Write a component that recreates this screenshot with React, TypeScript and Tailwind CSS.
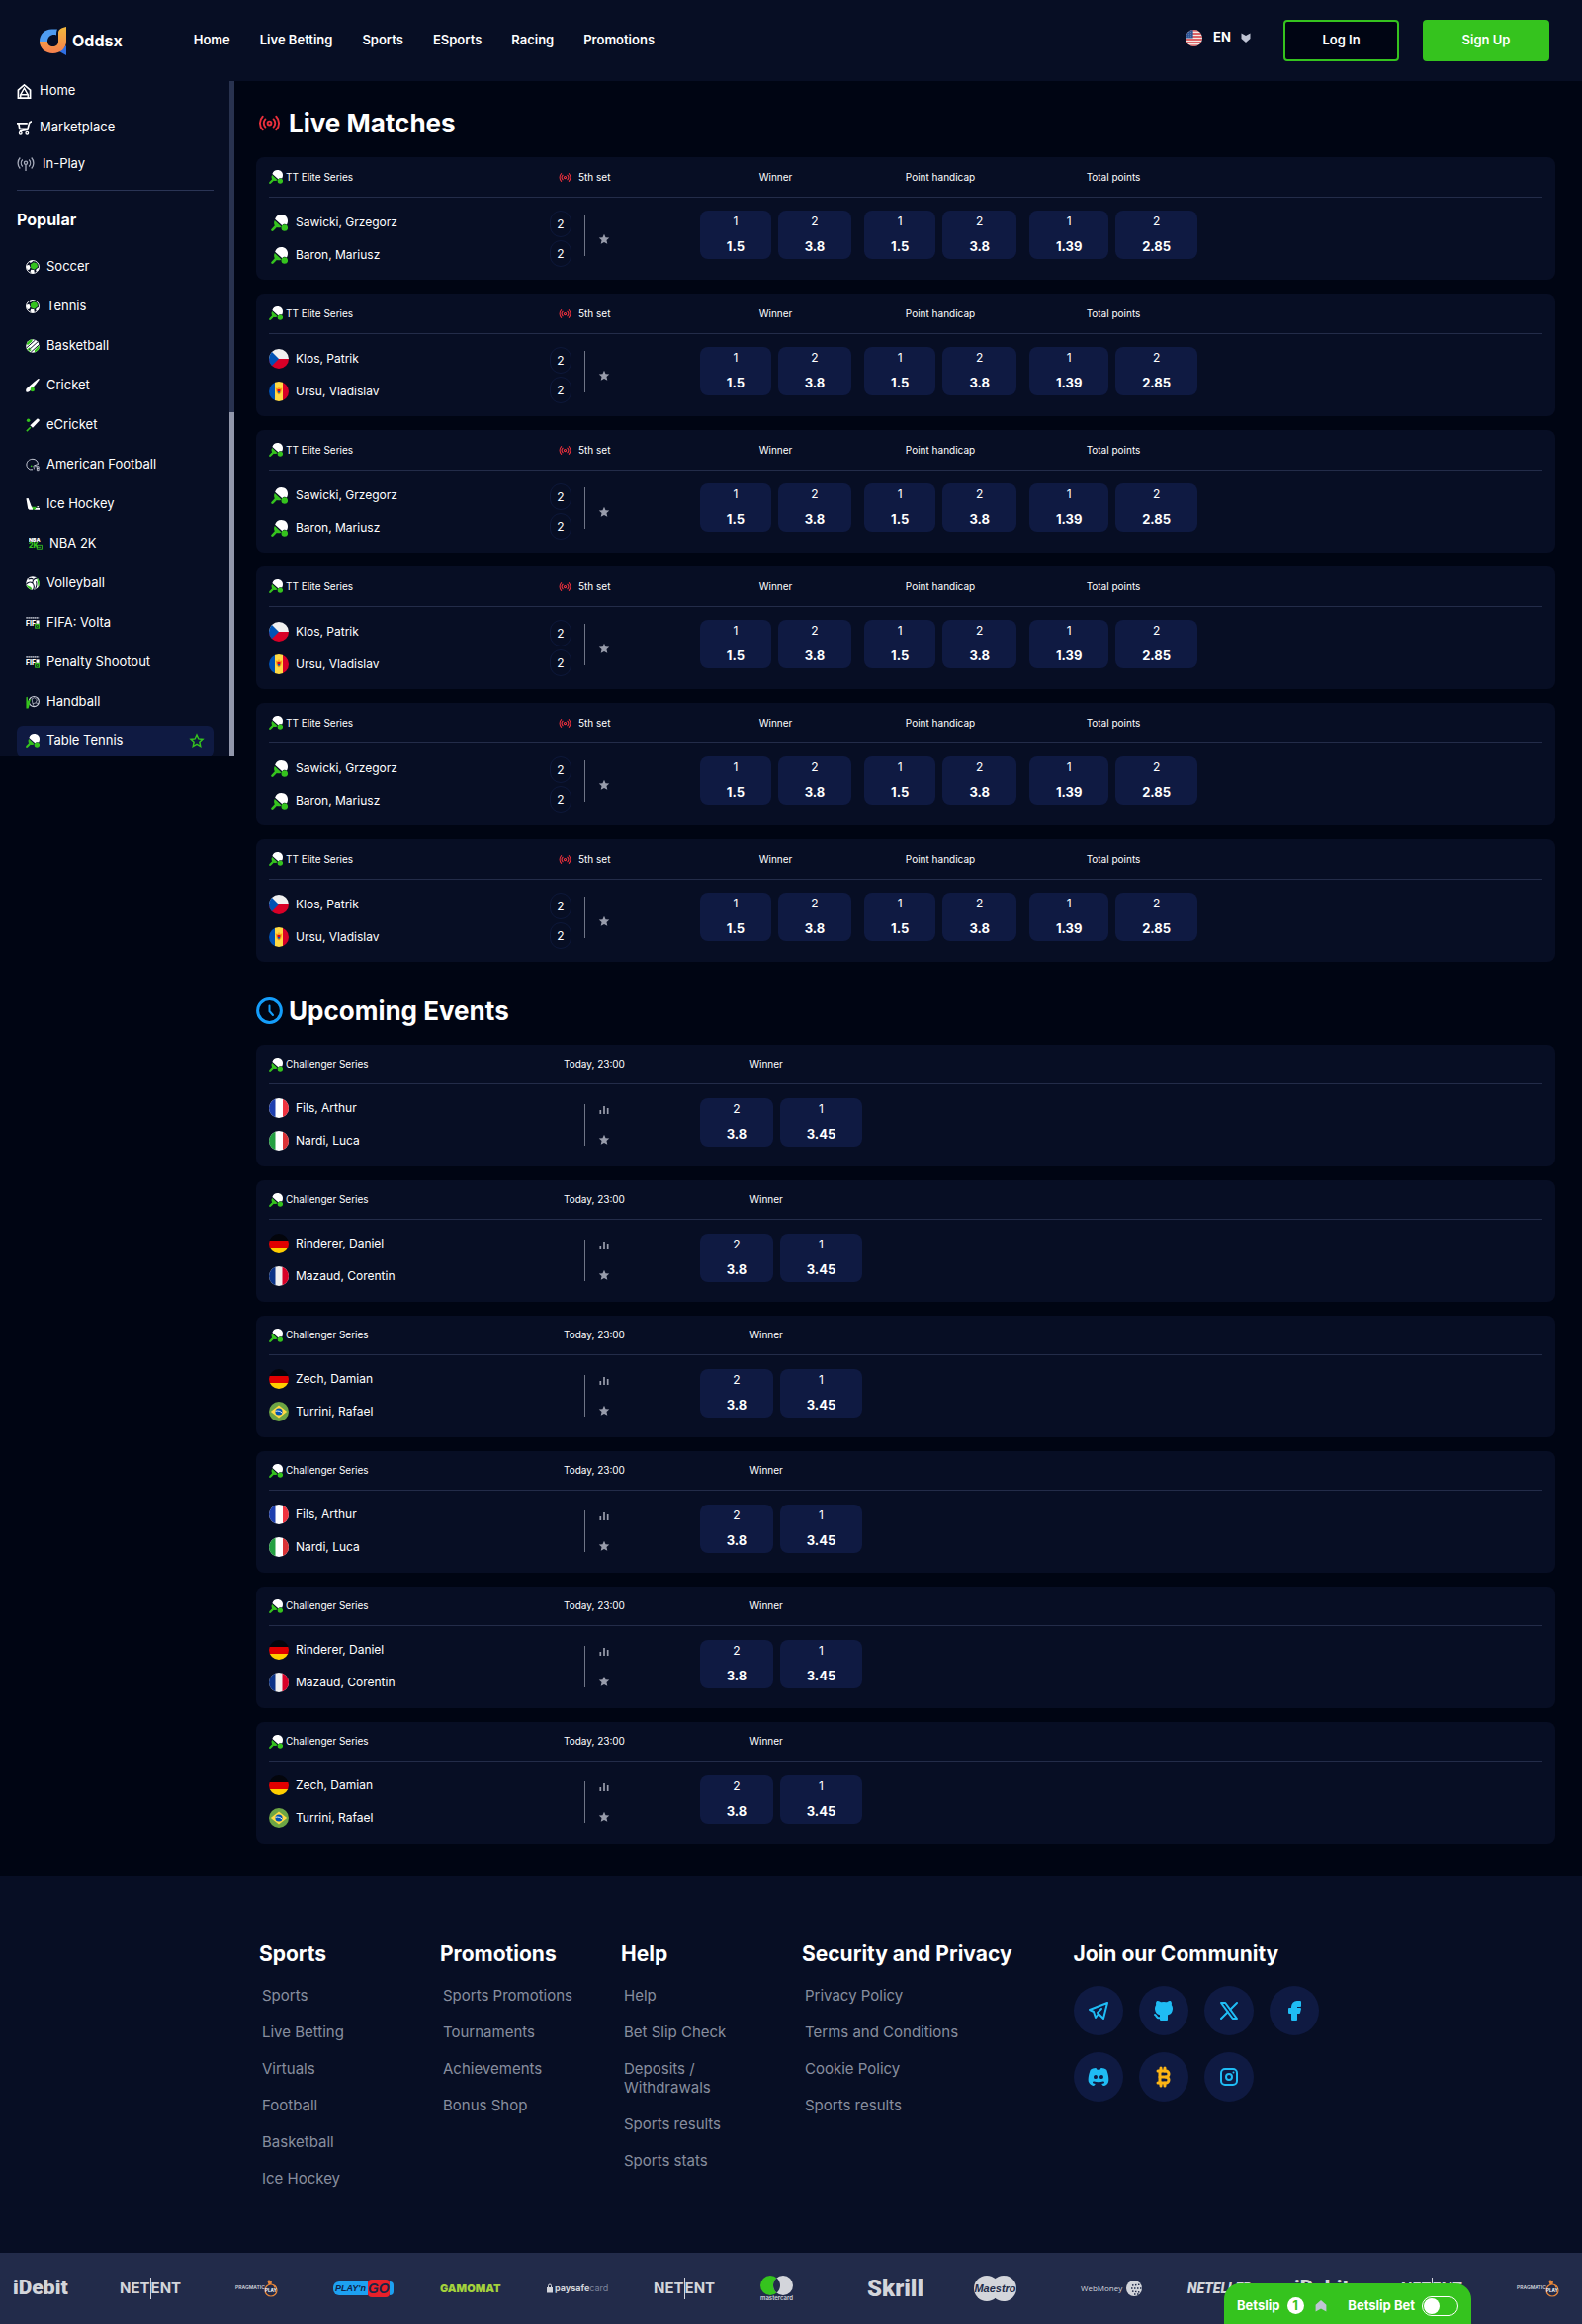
import type { ReactNode } from "react";
import { Radio } from "lucide-react";
import {
  TbBrandDiscordFilled,
  TbBrandFacebookFilled,
  TbBrandGithubFilled,
  TbBrandInstagram,
  TbBrandTelegram,
  TbBrandX,
  TbCurrencyBitcoin,
} from "react-icons/tb";

/* ── Flags ── */

type FlagCode = "cz" | "md" | "fr" | "fr2" | "it" | "de" | "br" | "us";

const FLAGS: Record<FlagCode, ReactNode> = {
  cz: (
    <>
      <path fill="#f0f0f0" d="M0 0h20v10H0z" />
      <path fill="#d80027" d="M0 10h20v10H0z" />
      <path fill="#0052b4" d="M0 0l10 10L0 20z" />
    </>
  ),
  md: (
    <>
      <path fill="#0052b4" d="M0 0h6v20H0z" />
      <path fill="#ffda44" d="M6 0h8v20H6z" />
      <path fill="#d80027" d="M14 0h6v20h-6z" />
      <path fill="#ff9811" d="M9.4 5.5h1.2v1.6l2.8-.6-1.2 5-2.2 2-2.2-2-1.2-5 2.8.6z" />
      <path fill="#d80027" d="M8.5 8h3v2h-3z" />
      <path fill="#0052b4" d="M8.5 10h3l-1.5 2.4z" />
    </>
  ),
  fr: (
    <>
      <path fill="#fff" d="M0 0h20v20H0z" />
      <path fill="#1e3fae" d="M0 0h6.5v20H0z" />
      <path fill="#ef3340" d="M14 0h6v20h-6z" />
    </>
  ),
  fr2: (
    <>
      <path fill="#f0f0f0" d="M0 0h20v20H0z" />
      <path fill="#0a3287" d="M0 0h6.5v20H0z" />
      <path fill="#d80027" d="M13.5 0H20v20h-6.5z" />
    </>
  ),
  it: (
    <>
      <path fill="#fff" d="M0 0h20v20H0z" />
      <path fill="#249f41" d="M0 0h6.5v20H0z" />
      <path fill="#da3236" d="M14 0h6v20h-6z" />
    </>
  ),
  de: (
    <>
      <path fill="#03050c" d="M0 0h20v7H0z" />
      <path fill="#e10000" d="M0 7h20v7H0z" />
      <path fill="#ffce00" d="M0 14h20v6H0z" />
    </>
  ),
  br: (
    <>
      <path fill="#6da544" d="M0 0h20v20H0z" />
      <path fill="#ffda44" d="M10 3.6l8.2 6.4-8.2 6.4L1.8 10z" />
      <circle cx="10" cy="10" r="3.6" fill="#0052b4" />
      <path stroke="#f0f0f0" strokeWidth="1" fill="none" d="M6.6 9.3c2.5-.6 5-.1 6.7 2" />
    </>
  ),
  us: (
    <>
      <path fill="#f3e9e4" d="M0 0h20v20H0z" />
      <path stroke="#d4373f" strokeWidth="1.7" d="M0 1h20M0 4.6h20M0 8.2h20M0 11.8h20M0 15.4h20M0 19h20" />
      <path fill="#2d5494" d="M0 0h9v10H0z" />
      <path stroke="#8fa6cc" strokeWidth=".7" strokeDasharray="1 1.5" d="M1 3h7M1 5.5h7M1 8h7" />
    </>
  ),
};

function Flag({ code, className = "size-5" }: { code: FlagCode; className?: string }) {
  return (
    <svg viewBox="0 0 20 20" className={`shrink-0 rounded-full ${className}`} aria-hidden>
      {FLAGS[code]}
    </svg>
  );
}

/* ── Sport icons: white shapes with green accents on a 16px grid ── */

const GREEN = "#35c31e";

function Icon({ className = "size-[14px]", children }: { className?: string; children: ReactNode }) {
  return (
    <svg viewBox="0 0 16 16" fill="none" className={`shrink-0 ${className}`} aria-hidden>
      {children}
    </svg>
  );
}

function Racket({ className }: { className?: string }) {
  return (
    <Icon className={className}>
      <path
        fill="#fff"
        d="M9.8 0C13.5 0 16 2.6 16 5.8c0 1.5-.3 2.9-1 4-1.6-.9-3.4-.6-4.3.9L3.9 4.5C4.7 1.8 6.9 0 9.8 0z"
      />
      <path
        fill={GREEN}
        d="M3.6 5.7l6.4 6c-1.3.9-3 1-4.5.5l-3.2 3.3c-.6.6-1.3.6-1.8.1s-.5-1.3.1-1.8l3-3.1C2.7 9.2 2.7 7.3 3.6 5.7z"
      />
      <circle cx="13" cy="12.7" r="3.1" fill={GREEN} />
    </Icon>
  );
}

const soccer = (
  <Icon>
    <circle cx="8" cy="8" r="7.4" fill="#070e24" stroke="#fff" strokeWidth="1.1" />
    <path
      fill="#fff"
      d="M4.5 1.5L8 .5l-.5 1.800L5 3.500zM.8 6.500l3-1 1.500 3-1.500 3-2.300-.5zM6 11l3.500.5.5 3-2 1-3-1.500zM11.500 11.500l2-2 1.800-.5-1 3-2 1.500z"
    />
    <path fill={GREEN} d="M9 2.500l4 1.500.8 4L10 11 6 9.500 5.500 5z" />
  </Icon>
);

const basketball = (
  <Icon>
    <circle cx="8" cy="8" r="7.8" fill="#fff" />
    <path stroke="#070e24" strokeWidth="1.1" d="M1 10L11 1M3 13L14 3M6 15L16 6" />
    <path fill={GREEN} d="M1 5C2.5 2 5 .3 8 .2L7 3 2 7zM15.8 7.5C15.9 11 14 14 10.5 15.4L10 13l4-4.5z" />
    <path stroke={GREEN} strokeWidth="1.3" d="M1.5 12.5L5 10M3.5 14.5L6 12" />
  </Icon>
);

const cricket = (
  <Icon>
    <path fill="#fff" d="M16 .5L14.5 0 9.5 4 1 11.5c-1 1-1 2.7-.5 4 1.500.3 3-.2 4-1L12 6z" />
    <circle cx="7.8" cy="12.6" r="2.5" fill={GREEN} />
  </Icon>
);

const eCricket = (
  <Icon>
    <path fill="#fff" d="M13 .8c1.3-.8 3.3.8 2.6 2.4L8 11 5 8.2z" />
    <path stroke={GREEN} strokeWidth="1.8" d="M1 15l4.5-4.5" />
    <circle cx="3" cy="2.5" r="2" fill={GREEN} />
  </Icon>
);

const helmet = (
  <Icon>
    <path
      stroke="#c9cdd8"
      strokeWidth="1.1"
      d="M8 13.5H5C2.5 12.5 1 10.5 1 8c0-3.500 3-6.500 7-6.500 3.500 0 6 2.500 6.300 6L9.500 9c-1 1 .5 2.500 0 4"
    />
    <path stroke="#c9cdd8" d="M10.5 10h4.500v4.500h-2V10.500M12.500 12H15" />
    <circle cx="6.5" cy="9.5" r="1" fill={GREEN} />
  </Icon>
);

const hockey = (
  <Icon>
    <path fill="#fff" d="M.5 1.5L3 1l3.5 9.5L8 12v2.5H4L2.500 13zM11 12.500h5v2h-6z" />
    <path fill={GREEN} d="M7 11h5.5l-2 3.5h-2z" />
    <path fill="#fff" d="M13 10.5h2v1.300h-2z" />
  </Icon>
);

const nba = (
  <Icon className="ml-[3px] size-[14px]">
    <text x="0" y="5.5" fill="#fff" fontSize="6" fontWeight="900">
      NBA
    </text>
    <text x="0" y="12.5" fill={GREEN} fontSize="8" fontWeight="900">
      2K
    </text>
    <path stroke={GREEN} d="M9.5 9.5h6V14h-6zM11 11.8h3" />
  </Icon>
);

const volleyball = (
  <Icon>
    <circle cx="8" cy="8" r="7.8" fill="#fff" />
    <path
      stroke="#070e24"
      strokeWidth="1.2"
      d="M8 8C7.5 5 10 2 14 2.5M8 8C5 6 2 7 .5 9.5M8 8c2 2.500 2 5 .5 8M3 3.500c2-1 4-1 5.500 0M12 6c1 3 .5 6-1 8.500"
    />
    <path fill={GREEN} d="M13 2c3 2.5 3.8 7 1.5 10.5l-1-6.5zM.5 10c1.500 3.500 4 5.500 7 5.800L6 12.500z" />
  </Icon>
);

const fifa = (
  <Icon>
    <path stroke="#c9cdd8" strokeWidth="2" strokeDasharray="1.5 .8" d="M.5 2H15" />
    <text x="0" y="11" fill="#fff" fontSize="8" fontWeight="800">
      FIF
    </text>
    <path fill="#fff" d="M12 5h3.5v4H12z" />
    <path fill={GREEN} d="M10.5 9H16v5.5h-5.5z" />
    <path stroke="#070e24" strokeWidth=".8" d="M12 11h2.5v2H12z" />
  </Icon>
);

const handball = (
  <Icon>
    <circle cx="9.5" cy="7.5" r="5.8" stroke="#c9cdd8" strokeWidth="1.3" />
    <path stroke="#c9cdd8" strokeWidth=".8" d="M7 4.500l3-1.500L13 5.500l-1.500 3.500-3.500 1zM8 10l1.500 3M11.500 9l3.500 1" />
    <path fill={GREEN} d="M.5 2.5L2 2l.5 5L5 4.5l.5 1L4 12l-1 3.500H.5z" />
  </Icon>
);

/* ── Small UI icons ── */

function DoubleChevron({ className = "" }: { className?: string }) {
  return (
    <svg viewBox="0 0 10 10" className={className} aria-hidden>
      <path fill="#bfc4d4" d="M.5.5L5 3 9.500.5V6L5 10 .5 6z" />
    </svg>
  );
}

function Star() {
  return (
    <svg viewBox="0 0 24 24" className="size-3" aria-hidden>
      <path
        fill="#989cab"
        d="M12 1.5l3.1 7 7.4.7-5.6 5 1.7 7.5-6.6-3.900-6.600 3.900 1.700-7.500-5.600-5 7.400-.7z"
      />
    </svg>
  );
}

function Bars() {
  return (
    <svg viewBox="0 0 12 12" className="size-3" aria-hidden>
      <path stroke="#989cab" strokeWidth="1.7" d="M2.3 10V6M6 10V2M9.7 10V4" />
    </svg>
  );
}

function Clock() {
  return (
    <svg viewBox="0 0 27 27" fill="none" className="size-[27px]" stroke="#149efb" aria-hidden>
      <circle cx="13.5" cy="13.5" r="11.9" strokeWidth="3" />
      <path strokeWidth="2" strokeLinecap="round" d="M13.5 8.5V14l3.500 4" />
    </svg>
  );
}

function Logo() {
  return (
    <svg viewBox="0 0 27 29" className="h-[29px] w-[27px]" fill="none" aria-hidden>
      <defs>
        <linearGradient id="logo-warm" x1="0" y1="0" x2="0" y2="1">
          <stop offset="0" stopColor="#f2b73c" />
          <stop offset="1" stopColor="#f5804e" />
        </linearGradient>
      </defs>
      <path fill="#2f6fe4" d="M20 25l7-6v10z" />
      <path
        fill="url(#logo-warm)"
        d="M27 0v15c0 7-6 12-13.5 12S0 22 0 15h8c0 3 2.5 5 5.5 5s5.500-2 5.500-5V6c0-3 3-5 8-6z"
      />
      <path fill="#4f9cf0" d="M0 15C0 7.5 5 2.5 12.5 2.5H18c-.8 1.500-1 3-1 6-4-1.500-9 1-9 6.500z" />
    </svg>
  );
}

const homeIcon = (
  <Icon className="size-[15px]">
    <path stroke="#fff" strokeWidth="1.8" d="M1.5 6.5L8 1l6.5 5.5V15h-13z" />
    <path stroke="#fff" strokeWidth="1.5" d="M8 4.5l4 7H4zM4 11v4M12 11v4" />
  </Icon>
);

const cartIcon = (
  <Icon className="size-[15px]">
    <path
      stroke="#fff"
      strokeWidth="1.8"
      d="M0 3h11.5M2 3l1 6h8.5M16 1c-2 .2-2.600 1-2.900 2.500L11.500 10 3 11.500"
    />
    <circle cx="4" cy="13.5" r="1.4" stroke="#fff" strokeWidth="1.4" />
    <circle cx="11" cy="13.5" r="1.4" stroke="#fff" strokeWidth="1.4" />
  </Icon>
);

const antennaIcon = (
  <svg viewBox="0 0 18 16" fill="none" stroke="#a5aaba" strokeWidth="1.3" className="h-4 w-[18px]" aria-hidden>
    <path d="M3.3 1.5a8 8 0 000 11M14.7 1.5a8 8 0 010 11M5.8 3.5a5 5 0 000 7M12.2 3.5a5 5 0 010 7M9 8.5V15" />
    <circle cx="9" cy="6.8" r="1.6" />
  </svg>
);

/* ── Data ── */

const NAV = ["Home", "Live Betting", "Sports", "ESports", "Racing", "Promotions"];

const QUICK_LINKS = [
  { label: "Home", icon: homeIcon },
  { label: "Marketplace", icon: cartIcon },
  { label: "In-Play", icon: antennaIcon },
];

const POPULAR = [
  { label: "Soccer", icon: soccer },
  { label: "Tennis", icon: soccer },
  { label: "Basketball", icon: basketball },
  { label: "Cricket", icon: cricket },
  { label: "eCricket", icon: eCricket },
  { label: "American Football", icon: helmet },
  { label: "Ice Hockey", icon: hockey },
  { label: "NBA 2K", icon: nba },
  { label: "Volleyball", icon: volleyball },
  { label: "FIFA: Volta", icon: fifa },
  { label: "Penalty Shootout", icon: fifa },
  { label: "Handball", icon: handball },
];

type Player = { name: string; flag?: FlagCode };

const LIVE_PAIRS: Player[][] = [
  [{ name: "Sawicki, Grzegorz" }, { name: "Baron, Mariusz" }],
  [
    { name: "Klos, Patrik", flag: "cz" },
    { name: "Ursu, Vladislav", flag: "md" },
  ],
];

const UPCOMING_PAIRS: Player[][] = [
  [
    { name: "Fils, Arthur", flag: "fr" },
    { name: "Nardi, Luca", flag: "it" },
  ],
  [
    { name: "Rinderer, Daniel", flag: "de" },
    { name: "Mazaud, Corentin", flag: "fr2" },
  ],
  [
    { name: "Zech, Damian", flag: "de" },
    { name: "Turrini, Rafael", flag: "br" },
  ],
];

const LIVE = [...LIVE_PAIRS, ...LIVE_PAIRS, ...LIVE_PAIRS];
const UPCOMING = [...UPCOMING_PAIRS, ...UPCOMING_PAIRS];

const MARKETS = [
  { title: "Winner", width: "w-[153px]", odds: ["1.5", "3.8"] },
  { title: "Point handicap", width: "w-[154px]", odds: ["1.5", "3.8"] },
  { title: "Total points", width: "w-[170px]", odds: ["1.39", "2.85"] },
];

const FOOTER_COLUMNS = [
  {
    title: "Sports",
    span: "col-span-2",
    links: ["Sports", "Live Betting", "Virtuals", "Football", "Basketball", "Ice Hockey"],
  },
  {
    title: "Promotions",
    span: "col-span-2",
    links: ["Sports Promotions", "Tournaments", "Achievements", "Bonus Shop"],
  },
  {
    title: "Help",
    span: "col-span-2",
    links: ["Help", "Bet Slip Check", "Deposits / Withdrawals", "Sports results", "Sports stats"],
  },
  {
    title: "Security and Privacy",
    span: "col-span-3",
    links: ["Privacy Policy", "Terms and Conditions", "Cookie Policy", "Sports results"],
  },
];

const SOCIALS = [
  { label: "Telegram", icon: <TbBrandTelegram size={24} /> },
  { label: "GitHub", icon: <TbBrandGithubFilled size={24} /> },
  { label: "X", icon: <TbBrandX size={24} /> },
  { label: "Facebook", icon: <TbBrandFacebookFilled size={24} /> },
  { label: "Discord", icon: <TbBrandDiscordFilled size={24} /> },
  { label: "Bitcoin", icon: <TbCurrencyBitcoin size={24} strokeWidth={3} className="text-[#fdb515]" /> },
  { label: "Instagram", icon: <TbBrandInstagram size={24} /> },
];

/* ── Header ── */

function Header() {
  return (
    <header className="flex h-[82px] items-center bg-[#070e24] pr-[33px] pl-10">
      <a href="#" className="flex items-center gap-[6px] text-base font-bold">
        <Logo />
        Oddsx
      </a>
      <nav className="ml-[72px] flex gap-[30px] text-[13px] font-semibold">
        {NAV.map((item) => (
          <a key={item} href="#">
            {item}
          </a>
        ))}
      </nav>
      <div className="ml-auto flex items-center">
        <label className="mb-[6px] flex items-center">
          <Flag code="us" className="mr-[11px] size-[17px]" />
          <select aria-label="Language" className="w-7 appearance-none text-[13px] font-bold outline-none">
            <option>EN</option>
          </select>
          <DoubleChevron className="size-[10px]" />
        </label>
        <button className="ml-[33px] h-[42px] w-[117px] rounded-[4px] border-2 border-[#35c31e] bg-[#000513] text-[13px] font-semibold">
          Log In
        </button>
        <button className="ml-6 h-[42px] w-[128px] rounded-[4px] bg-[#35c31e] text-[13px] font-semibold">
          Sign Up
        </button>
      </div>
    </header>
  );
}

/* ── Sidebar ── */

function Sidebar() {
  return (
    <aside className="flex h-[683px] w-[237px] shrink-0 overflow-hidden bg-[#070e24] text-[13px]">
      <div className="flex-1 pr-4 pl-[17px]">
        <ul className="flex flex-col gap-[17px]">
          {QUICK_LINKS.map((link) => (
            <li key={link.label}>
              <a href="#" className="flex h-5 items-center gap-2">
                {link.icon}
                {link.label}
              </a>
            </li>
          ))}
        </ul>
        <hr className="mt-4 border-[#2a3455]" />
        <h2 className="mt-[17px] text-base font-bold">Popular</h2>
        <ul className="mt-5 flex flex-col gap-2">
          {POPULAR.map((sport) => (
            <li key={sport.label}>
              <a href="#" className="flex h-8 items-center gap-[7px] px-[9px]">
                {sport.icon}
                {sport.label}
              </a>
            </li>
          ))}
          <li>
            <a href="#" className="flex h-8 items-center gap-[7px] rounded-md bg-[#0f1a42] px-[9px]">
              <Racket />
              Table Tennis
              <svg viewBox="0 0 24 24" fill="none" className="ml-auto size-4" aria-hidden>
                <path
                  stroke={GREEN}
                  strokeWidth="2.2"
                  d="M12 3l2.7 5.9 6.3.7-4.7 4.3 1.3 6.4-5.600-3.200-5.600 3.200 1.300-6.400L3 9.600l6.300-.7z"
                />
              </svg>
            </a>
          </li>
        </ul>
      </div>
      {/* scroll track */}
      <div className="flex w-[5px] items-end bg-[#28324f]">
        <div className="h-[51%] w-full bg-[#9197ab]" />
      </div>
    </aside>
  );
}

/* ── Match cards ── */

function Players({ players }: { players: Player[] }) {
  return (
    <ul className="flex w-[284px] flex-col gap-[13px] text-xs">
      {players.map((p) => (
        <li key={p.name} className="flex h-5 items-center gap-[7px]">
          <span className="flex w-5 justify-center">
            {p.flag ? <Flag code={p.flag} /> : <Racket className="size-[17px]" />}
          </span>
          {p.name}
        </li>
      ))}
    </ul>
  );
}

function Odd({ pick, value }: { pick: string; value: string }) {
  return (
    <button className="flex h-[49px] flex-auto flex-col items-center justify-between rounded-lg bg-[#0f1a42] pt-px pb-[3px]">
      <span className="text-xs leading-5">{pick}</span>
      <span className="text-[13px] leading-5 font-bold">{value}</span>
    </button>
  );
}

function LiveCard({ players }: { players: Player[] }) {
  return (
    <article className="h-[124px] rounded-lg bg-[#070e24] px-[13px]">
      <div className="flex h-[41px] items-center border-b border-[#232c49] text-[10px]">
        <span className="flex w-[293px] items-center gap-[3px]">
          <Racket />
          TT Elite Series
        </span>
        <span className="flex w-[143px] items-center gap-[7px]">
          <Radio size={13} strokeWidth={2} className="text-[#e9303c]" />
          5th set
        </span>
        <div className="flex gap-[13px] text-center">
          {MARKETS.map((m) => (
            <span key={m.title} className={m.width}>
              {m.title}
            </span>
          ))}
        </div>
      </div>
      <div className="flex items-start pt-[13px]">
        <div className="flex w-[436px] shrink-0 items-start">
          <div className="pt-0.5">
            <Players players={players} />
          </div>
          <div className="flex flex-col gap-[3px] text-xs">
            {["home", "away"].map((side) => (
              <span
                key={side}
                className="flex h-[27px] w-[22px] items-center justify-center rounded-full border border-[#0d183a]"
              >
                2
              </span>
            ))}
          </div>
          <span className="mt-1 ml-[13px] h-[42px] w-px bg-[#6f7587]" />
          <button aria-label="Add to favourites" className="ml-[13px] flex h-[58px] items-center">
            <Star />
          </button>
        </div>
        <div className="flex gap-[13px]">
          {MARKETS.map((m) => (
            <div key={m.title} className={`flex gap-[7px] ${m.width}`}>
              <Odd pick="1" value={m.odds[0]} />
              <Odd pick="2" value={m.odds[1]} />
            </div>
          ))}
        </div>
      </div>
    </article>
  );
}

function UpcomingCard({ players }: { players: Player[] }) {
  return (
    <article className="h-[123px] rounded-lg bg-[#070e24] px-[13px]">
      <div className="flex h-10 items-center border-b border-[#232c49] text-[10px]">
        <span className="flex w-[298px] items-center gap-[3px]">
          <Racket />
          Challenger Series
        </span>
        <span className="w-[138px]">Today, 23:00</span>
        <span className="w-[134px] text-center">Winner</span>
      </div>
      <div className="flex items-start pt-[14px]">
        <div className="flex w-[436px] shrink-0 items-start">
          <Players players={players} />
          <span className="mt-[6px] ml-[35px] h-[42px] w-px bg-[#6f7587]" />
          <div className="mt-[6px] ml-[13px] flex h-[42px] flex-col justify-between">
            <button aria-label="Statistics">
              <Bars />
            </button>
            <button aria-label="Add to favourites">
              <Star />
            </button>
          </div>
        </div>
        <div className="flex w-[164px] gap-[7px]">
          <Odd pick="2" value="3.8" />
          <Odd pick="1" value="3.45" />
        </div>
      </div>
    </article>
  );
}

/* ── Footer ── */

function Footer() {
  return (
    <footer className="bg-[#070e24]">
      <div className="grid h-[381px] grid-cols-12 pt-16 pr-60 pl-[262px]">
        {FOOTER_COLUMNS.map((col) => (
          <div key={col.title} className={col.span}>
            <h3 className="text-[21px] leading-[30px] font-bold">{col.title}</h3>
            <ul className="mt-[17px] flex flex-col gap-[18px] pl-[3px] text-[15px] leading-[19px] text-[#888e9f]">
              {col.links.map((link) => (
                <li key={link}>
                  <a href="#" className={link.includes("/") ? "block w-[100px]" : "whitespace-nowrap"}>
                    {link}
                  </a>
                </li>
              ))}
            </ul>
          </div>
        ))}
        <div className="col-span-3">
          <h3 className="text-[21px] leading-[30px] font-bold">Join our Community</h3>
          <div className="mt-[17px] flex flex-wrap gap-x-4 gap-y-[17px] text-[#1fbcf4]">
            {SOCIALS.map((s) => (
              <a
                key={s.label}
                href="#"
                aria-label={s.label}
                className="flex size-[50px] items-center justify-center rounded-full bg-[#0f1a42]"
              >
                {s.icon}
              </a>
            ))}
          </div>
        </div>
      </div>
      <Partners />
    </footer>
  );
}

const iDebit = <span className="font-['Roboto'] text-[21px] font-black">iDebit</span>;

const netent = (
  <span className="flex items-center text-[15px] font-bold">
    NET
    <span className="h-[22px] w-px bg-[#d3d5db]" />
    ENT
  </span>
);

const pragmatic = (
  <span className="flex w-full items-center justify-center text-[5px] font-semibold">
    PRAGMATIC
    <svg viewBox="0 0 14 18" className="-ml-px h-[18px] w-[14px]" fill="none" aria-hidden>
      <circle cx="7" cy="11" r="6" stroke="#e8873a" strokeWidth="1.2" />
      <path fill="#e8873a" d="M5 0l1.5 2L8 1.5 7.5 5h-3L3.5 2zM9 6l3 1-1 2z" />
      <text x="1" y="13" fontSize="4.5" fontWeight="700" fill="#fff">
        PLAY
      </text>
    </svg>
  </span>
);

const PARTNERS: ReactNode[] = [
  iDebit,
  netent,
  pragmatic,
  <span className="flex items-center font-['Liberation_Sans'] font-bold italic">
    <span className="rounded-l-md bg-[#1da1f2] px-0.5 text-[9px] leading-[14px] text-[#10244a]">PLAY'n</span>
    <span className="rounded-sm bg-[#e8202a] text-[14px] leading-[18px] text-[#1b2546]">GO</span>
    <span className="h-[14px] w-1 rounded-r-full bg-[#1da1f2]" />
  </span>,
  <span className="text-[11px] font-black text-[#a4d23c]">GAMOMAT</span>,
  <span className="flex items-center text-[9px]">
    <svg viewBox="0 0 6 10" className="mr-0.5 h-[10px] w-[6px]" aria-hidden>
      <path fill="none" stroke="#d3d5db" d="M1.5 4V2.5a1.5 1.5 0 013 0V4" />
      <path fill="#d3d5db" d="M0 4h6v5.5H0z" />
    </svg>
    <b>paysafe</b>
    <span className="text-[#7d849b]">card</span>
  </span>,
  netent,
  <span className="flex flex-col items-center">
    <svg viewBox="0 0 33 20" className="h-5 w-[33px]" aria-hidden>
      <circle cx="10" cy="10" r="10" fill="#35c31e" />
      <circle cx="23" cy="10" r="10" fill="#d3d5db" />
      <path fill="#222b4a" d="M16.5 2.4a10 10 0 010 15.2 10 10 0 010-15.2z" />
    </svg>
    <span className="text-[6px] leading-[6px] font-semibold">mastercard</span>
  </span>,
  <span className="font-['Roboto'] text-[24px] font-black">Skrill</span>,
  <svg viewBox="0 0 43 26" className="h-[26px] w-[43px]" aria-hidden>
    <circle cx="13" cy="13" r="13" fill="#d3d5db" />
    <circle cx="30" cy="13" r="13" fill="#d3d5db" />
    <text
      x="21.5"
      y="17"
      textAnchor="middle"
      fontFamily="Liberation Sans"
      fontSize="11"
      fontWeight="700"
      fontStyle="italic"
      fill="#222b4a"
    >
      Maestro
    </text>
  </svg>,
  <span className="flex items-center gap-1 font-['Open_Sans'] text-[8px]">
    WebMoney
    <svg viewBox="0 0 16 16" className="size-4" aria-hidden>
      <circle cx="8" cy="8" r="8" fill="#d3d5db" />
      <path stroke="#222b4a" strokeWidth="1.5" strokeDasharray="1.5 1.5" d="M6 5l9-1M5 8h11M6 11l8 1M8 14h5" />
    </svg>
  </span>,
  <span className="font-['Roboto'] text-[14px] font-black italic">NETELLER</span>,
  iDebit,
  netent,
  pragmatic,
];

function Partners() {
  return (
    <div className="flex h-[72px] items-center gap-[47px] overflow-hidden bg-[#222b4a] px-[13px] whitespace-nowrap text-[#d3d5db]">
      {PARTNERS.map((logo, i) => (
        <div key={i} className="flex w-[61px] shrink-0">
          {logo}
        </div>
      ))}
    </div>
  );
}

function Betslip() {
  return (
    <div className="fixed right-[112px] bottom-0 flex h-[41px] w-[250px] items-center rounded-t-2xl bg-[#35c31e] px-[13px] pt-1 text-[13px] font-bold">
      <button className="flex items-center">
        Betslip
        <span className="ml-[7px] flex size-[17px] items-center justify-center rounded-full bg-white text-[#35c31e]">
          1
        </span>
        <DoubleChevron className="ml-[11px] size-3 rotate-180" />
      </button>
      <label className="ml-auto flex items-center gap-[7px]">
        Betslip Bet
        <input
          type="checkbox"
          className="h-5 w-[37px] appearance-none rounded-full border border-white p-px before:block before:size-4 before:rounded-full before:bg-white checked:before:ml-auto"
        />
      </label>
    </div>
  );
}

export default function App() {
  return (
    <div className="min-h-screen bg-[#000513] font-['Inter',sans-serif] text-white">
      <Header />
      <div className="flex items-start">
        <Sidebar />
        <main className="min-w-0 flex-1 pt-6 pr-[27px] pb-[33px] pl-[22px]">
          <section>
            <h1 className="flex h-9 items-center gap-[6px] text-[26px] font-bold">
              <span className="flex w-[27px] justify-center">
                <Radio size={23} strokeWidth={2} className="text-[#e9303c]" />
              </span>
              Live Matches
            </h1>
            <div className="mt-[17px] flex flex-col gap-[14px]">
              {LIVE.map((players, i) => (
                <LiveCard key={i} players={players} />
              ))}
            </div>
          </section>
          <section className="mt-[31px]">
            <h1 className="flex h-9 items-center gap-[6px] text-[26px] font-bold">
              <Clock />
              Upcoming Events
            </h1>
            <div className="mt-[17px] flex flex-col gap-[14px]">
              {UPCOMING.map((players, i) => (
                <UpcomingCard key={i} players={players} />
              ))}
            </div>
          </section>
        </main>
      </div>
      <Footer />
      <Betslip />
    </div>
  );
}
